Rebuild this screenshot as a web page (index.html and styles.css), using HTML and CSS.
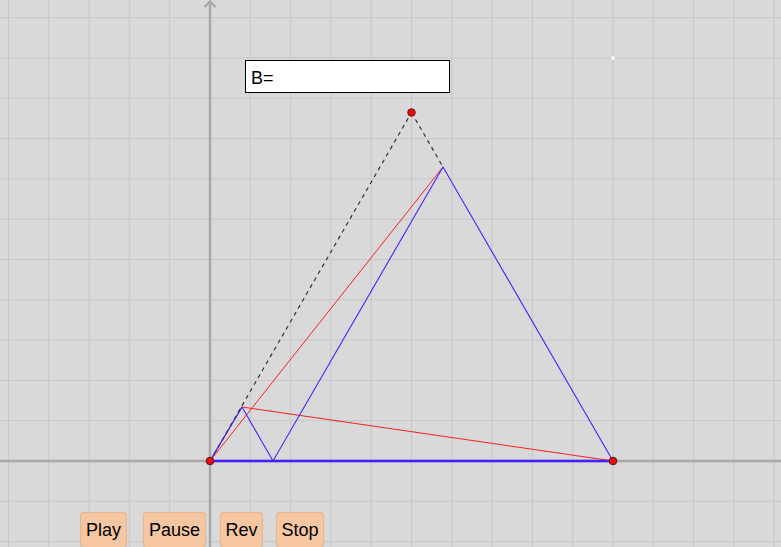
FILE: index.html
```html
<!DOCTYPE html>
<html>
<head>
<meta charset="utf-8">
<link rel="stylesheet" href="styles.css">
</head>
<body>
<div class="canvas">
  <svg class="plot" width="781" height="547" viewBox="0 0 781 547" xmlns="http://www.w3.org/2000/svg">
    <g class="grid">
      <line x1="8.5" y1="0" x2="8.5" y2="547"/>
      <line x1="48.8" y1="0" x2="48.8" y2="547"/>
      <line x1="89.1" y1="0" x2="89.1" y2="547"/>
      <line x1="129.4" y1="0" x2="129.4" y2="547"/>
      <line x1="169.7" y1="0" x2="169.7" y2="547"/>
      <line x1="250.3" y1="0" x2="250.3" y2="547"/>
      <line x1="290.6" y1="0" x2="290.6" y2="547"/>
      <line x1="330.9" y1="0" x2="330.9" y2="547"/>
      <line x1="371.2" y1="0" x2="371.2" y2="547"/>
      <line x1="411.5" y1="0" x2="411.5" y2="547"/>
      <line x1="451.8" y1="0" x2="451.8" y2="547"/>
      <line x1="492.1" y1="0" x2="492.1" y2="547"/>
      <line x1="532.4" y1="0" x2="532.4" y2="547"/>
      <line x1="572.7" y1="0" x2="572.7" y2="547"/>
      <line x1="613" y1="0" x2="613" y2="547"/>
      <line x1="653.3" y1="0" x2="653.3" y2="547"/>
      <line x1="693.6" y1="0" x2="693.6" y2="547"/>
      <line x1="733.9" y1="0" x2="733.9" y2="547"/>
      <line x1="774.2" y1="0" x2="774.2" y2="547"/>
      <line x1="0" y1="541.6" x2="781" y2="541.6"/>
      <line x1="0" y1="501.3" x2="781" y2="501.3"/>
      <line x1="0" y1="420.7" x2="781" y2="420.7"/>
      <line x1="0" y1="380.4" x2="781" y2="380.4"/>
      <line x1="0" y1="340.1" x2="781" y2="340.1"/>
      <line x1="0" y1="299.8" x2="781" y2="299.8"/>
      <line x1="0" y1="259.5" x2="781" y2="259.5"/>
      <line x1="0" y1="219.2" x2="781" y2="219.2"/>
      <line x1="0" y1="178.9" x2="781" y2="178.9"/>
      <line x1="0" y1="138.6" x2="781" y2="138.6"/>
      <line x1="0" y1="98.3" x2="781" y2="98.3"/>
      <line x1="0" y1="58" x2="781" y2="58"/>
      <line x1="0" y1="17.7" x2="781" y2="17.7"/>
    </g>
    <g class="axes">
      <line x1="0" y1="461" x2="781" y2="461"/>
      <line x1="210" y1="1" x2="210" y2="547"/>
      <path class="arrow" d="M204.5 7 L210 1.5 L215.5 7"/>
    </g>
    <line class="dashed" x1="210" y1="461" x2="411.5" y2="112.5"/>
    <line class="dashed" x1="411.5" y1="112.5" x2="443" y2="167"/>
    <line class="black" x1="210" y1="461" x2="242" y2="407"/>
    <line class="red" x1="210" y1="461" x2="443" y2="167"/>
    <line class="red" x1="242" y1="407" x2="613" y2="461"/>
    <polyline class="blue" points="210,461 242,407 273,461 443,167 613,461"/>
    <line class="blue thick" x1="210" y1="461" x2="613" y2="461"/>
    <circle class="pt" cx="210" cy="461" r="3.8"/>
    <circle class="pt" cx="613" cy="461" r="3.8"/>
    <circle class="pt" cx="411.5" cy="112.5" r="3.8"/>
    <rect class="white-pt" x="611.5" y="56.5" width="3" height="3"/>
  </svg>

  <div class="inputbox"><span class="label">B=</span></div>

  <div class="buttons">
    <button class="btn btn-play">Play</button>
    <button class="btn btn-pause">Pause</button>
    <button class="btn btn-rev">Rev</button>
    <button class="btn btn-stop">Stop</button>
  </div>
</div>
</body>
</html>
```
FILE: styles.css
```css
html, body {
  margin: 0;
  padding: 0;
  background: #d9d9d9;
  overflow: hidden;
}

.canvas {
  position: relative;
  width: 781px;
  height: 547px;
  overflow: hidden;
  background: #d9d9d9;
  font-family: "Liberation Sans", Arial, sans-serif;
}

.plot {
  display: block;
}

.grid line {
  stroke: #c7c7c7;
  stroke-width: 1;
}

.axes line {
  stroke: #a8a8a8;
  stroke-width: 2.4;
}

.axes .arrow {
  fill: none;
  stroke: #a8a8a8;
  stroke-width: 2.4;
}

.dashed {
  stroke: #333333;
  stroke-width: 1.2;
  stroke-dasharray: 4 4;
}

.black {
  stroke: #222222;
  stroke-width: 1;
}

.red {
  stroke: #ff2020;
  stroke-width: 1;
}

.blue {
  fill: none;
  stroke: #4422ff;
  stroke-width: 1.1;
}

.blue.thick {
  stroke-width: 2.4;
}

.pt {
  fill: #ff0000;
  stroke: #4a2020;
  stroke-width: 1;
}

.white-pt {
  fill: #ffffff;
}

.inputbox {
  position: absolute;
  left: 245px;
  top: 60px;
  width: 203px;
  height: 31px;
  background: #ffffff;
  border: 1px solid #000000;
  display: flex;
  align-items: center;
}

.inputbox .label {
  padding-left: 5px;
  font-size: 18px;
  color: #000;
  padding-top: 3px;
}

.buttons {
  position: absolute;
  left: 80px;
  top: 512px;
  display: flex;
}

.btn {
  height: 36px;
  padding: 0 2px 0;
  margin: 0;
  background: #f4c7a2;
  border: 1px solid #e6b891;
  border-radius: 4px;
  font-family: "Liberation Sans", Arial, sans-serif;
  font-size: 18px;
  color: #000;
  box-shadow: 0 0 1px rgba(0,0,0,0.15);
}

.btn-play { width: 47px; }
.btn-pause { width: 63px; margin-left: 16px; }
.btn-rev { width: 43px; margin-left: 14px; }
.btn-stop { width: 48px; margin-left: 13px; }
```
